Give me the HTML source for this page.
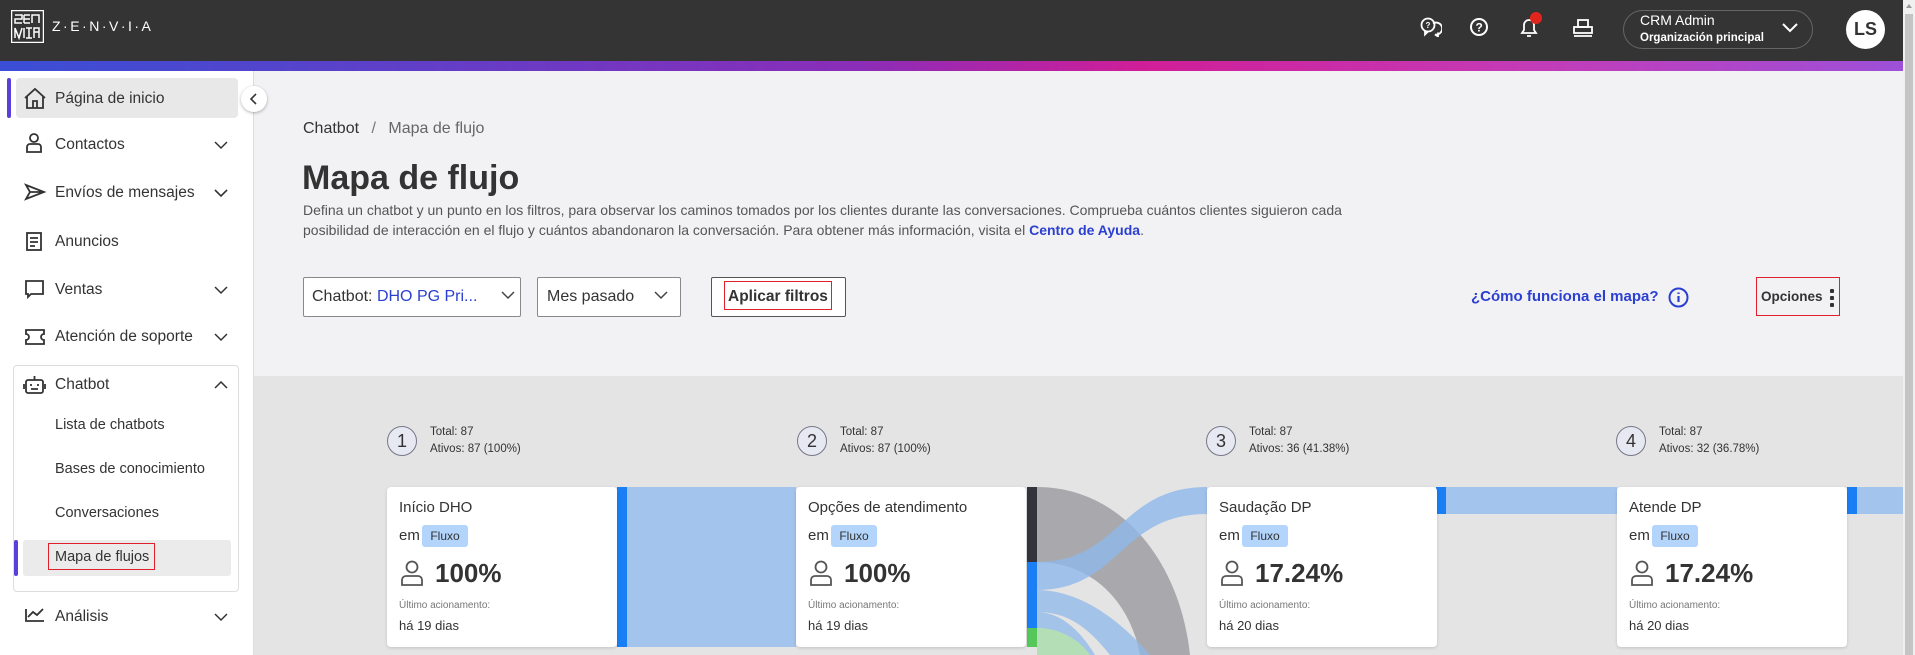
<!DOCTYPE html>
<html><head><meta charset="utf-8"><style>
*{box-sizing:border-box;margin:0;padding:0}
body{width:1915px;height:655px;overflow:hidden;background:#f2f2f4;font-family:"Liberation Sans",sans-serif;color:#333;position:relative}
.abs{position:absolute}
.top{left:0;top:0;width:1903px;height:61px;background:#343434}
.grad{left:0;top:61px;width:1903px;height:10px;background:linear-gradient(90deg,#3a4fd6 0%,#8a2db8 45%,#d01e98 60%,#c43bb6 80%,#9d50d8 100%)}
.sb{left:1903px;top:0;width:12px;height:655px;background:#f0f0f0}
.side{left:0;top:71px;width:254px;height:584px;background:#fff;border-right:1px solid #ddd}
.it{position:absolute;left:55px;font-size:15.5px;color:#333;line-height:20px}
.t{white-space:nowrap}
.card{position:absolute;top:487px;width:230px;height:160px;background:#fff;border-radius:4px;box-shadow:0 1px 3px rgba(0,0,0,.15)}
.card .ti{position:absolute;left:12px;top:12px;font-size:15px;color:#333}
.card .em{position:absolute;left:12px;top:40px;font-size:15px;color:#333}
.card .pill{position:absolute;left:35px;top:38px;width:46px;height:22px;background:#b3d4fb;border-radius:3px;font-size:12px;line-height:22px;text-align:center;color:#333}
.card .pc{position:absolute;left:48px;top:71px;font-size:26px;font-weight:bold;color:#333}
.card .ul{position:absolute;left:12px;top:113px;font-size:10px;color:#777}
.card .ha{position:absolute;left:12px;top:131px;font-size:13px;color:#333}
.step{position:absolute;top:426px;width:30px;height:30px;border:1px solid #778;border-radius:50%;background:#e6e8f2;font-size:18px;text-align:center;line-height:28px;color:#333}
.st{position:absolute;font-size:11.5px;color:#333;line-height:17px}
</style></head><body>
<div class="abs top"></div>
<div class="abs grad"></div>
<div class="abs sb"><div style="position:absolute;left:2px;top:14px;width:8px;height:641px;background:#c4c4c4"></div><div style="position:absolute;left:3px;top:4px;width:0;height:0;border-left:3px solid transparent;border-right:3px solid transparent;border-bottom:4px solid #999"></div></div>
<svg class="abs" style="left:11px;top:10px" width="33" height="33" viewBox="0 0 33 33"><rect x="0.5" y="0.5" width="32" height="32" fill="none" stroke="#fff" stroke-width="1.5"/><path d="M4 5h7v4H4v4h7M13 5h6M13 9h6M13 13h6M13 5v8M21 13V5h7v8M4 28V18l4 10 3-10M13 18v10M15 18h6M15 28h6M18 18v10M23 28v-6h5v6M23 22v-4h5v4" stroke="#fff" stroke-width="1.5" fill="none"/></svg>
<div class="abs t" style="left:52px;top:18px;color:#fff;font-size:14px;letter-spacing:2.5px">Z·E·N·V·I·A</div>
<svg class="abs" style="left:1420px;top:17px" width="22" height="20" viewBox="0 0 22 20" fill="none" stroke="#fff" stroke-width="1.8"><circle cx="8" cy="8" r="6.5"/><path d="M8 14.5l-3 3v-4M13 6.5a6 6 0 1 1 2 11l3 2v-4"/><text x="5.5" y="11" font-size="8" fill="#fff" stroke="none" font-weight="bold">?</text></svg>
<svg class="abs" style="left:1469px;top:17px" width="20" height="20" viewBox="0 0 20 20"><circle cx="10" cy="10" r="8" fill="none" stroke="#fff" stroke-width="2"/><text x="6.5" y="14.5" font-size="12" font-weight="bold" fill="#fff" font-family="Liberation Sans">?</text></svg>
<svg class="abs" style="left:1518px;top:15px" width="22" height="24" viewBox="0 0 22 24" fill="none" stroke="#fff" stroke-width="1.8"><path d="M4 18h14l-2-3V10a5 5 0 0 0-10 0v5zM9 21h4"/></svg>
<div class="abs" style="left:1530px;top:12px;width:12px;height:12px;border-radius:50%;background:#e0261c"></div>
<svg class="abs" style="left:1573px;top:18px" width="20" height="20" viewBox="0 0 20 20" fill="none" stroke="#fff" stroke-width="1.8"><rect x="5" y="2" width="10" height="7"/><rect x="1" y="9" width="18" height="6"/><path d="M1 18h18"/></svg>
<div class="abs" style="left:1623px;top:10px;width:190px;height:39px;border:1px solid #666;border-radius:20px"></div>
<div class="abs t" style="left:1640px;top:12px;color:#fff;font-size:14px">CRM Admin</div>
<div class="abs t" style="left:1640px;top:32px;color:#fff;font-size:11.5px;font-weight:bold">Organización principal</div>
<svg class="abs" style="left:1781px;top:22px" width="18" height="12" viewBox="0 0 18 12"><path d="M2 2l7 7 7-7" stroke="#fff" stroke-width="2" fill="none"/></svg>
<div class="abs" style="left:1846px;top:10px;width:39px;height:39px;border-radius:50%;background:#fff;color:#333;font-weight:bold;font-size:18px;text-align:center;line-height:39px">LS</div>
<div class="abs side">
<div class="abs" style="left:7px;top:7px;width:4px;height:40px;background:#5b3fd9;border-radius:2px"></div>
<div class="abs" style="left:16px;top:7px;width:222px;height:40px;background:#e8e8e8;border-radius:4px"></div>
<div class="abs" style="left:13px;top:294px;width:226px;height:227px;border:1px solid #ddd;border-radius:4px"></div>
<div class="abs" style="left:14px;top:469px;width:4px;height:36px;background:#5b3fd9;border-radius:2px"></div>
<div class="abs" style="left:23px;top:469px;width:208px;height:36px;background:#ebebeb;border-radius:3px"></div>
<div class="abs" style="left:48px;top:472px;width:107px;height:27px;border:1px solid #e0202a"></div>
</div>
<svg class="abs" style="left:0;top:71px" width="254" height="584" fill="none" stroke="#333" stroke-width="1.8">
<path d="M25 27l10-9 10 9M27 25v12h16V25M33 37v-7h4v7"/>
<circle cx="34" cy="67" r="4"/><path d="M27 81v-5a3 3 0 0 1 3-3h8a3 3 0 0 1 3 3v5z"/>
<path d="M26 114l18 7-18 7 4-7z M30 121h14"/>
<rect x="27" y="162" width="14" height="17"/><path d="M30 167h8M30 171h8M30 175h5"/>
<path d="M26 210h17v13H31l-3 3v-3h-2z"/>
<path d="M26 259h18v4a3 3 0 0 0 0 6v4H26v-4a3 3 0 0 0 0-6z"/>
<rect x="26" y="309" width="17" height="13" rx="2"/><path d="M34.5 305v4M30 314h2M37 314h2M31 318h7M24 313v5M45 313v5"/>
<path d="M26 538v12h18M28 546l5-5 4 3 6-6"/>
<path d="M215 71l6 6 6-6M215 119l6 6 6-6M215 216l6 6 6-6M215 263l6 6 6-6M215 317l6-6 6 6M215 543l6 6 6-6" stroke-width="1.5"/>
</svg>
<div class="it t" style="top:89px">Página de inicio</div>
<div class="it t" style="top:135px">Contactos</div>
<div class="it t" style="top:183px">Envíos de mensajes</div>
<div class="it t" style="top:232px">Anuncios</div>
<div class="it t" style="top:280px">Ventas</div>
<div class="it t" style="top:327px">Atención de soporte</div>
<div class="it t" style="top:375px">Chatbot</div>
<div class="it t" style="top:415px;font-size:14.5px">Lista de chatbots</div>
<div class="it t" style="top:459px;font-size:14.5px">Bases de conocimiento</div>
<div class="it t" style="top:503px;font-size:14.5px">Conversaciones</div>
<div class="it t" style="top:547px;font-size:14.5px">Mapa de flujos</div>
<div class="it t" style="top:607px">Análisis</div>
<svg class="abs" style="left:0;top:0" width="254" height="260" fill="none" stroke="#333" stroke-width="1.5"><path d="M215 190l6 6 6-6"/></svg>
<div class="abs" style="left:241px;top:86px;width:26px;height:26px;border-radius:50%;background:#fff;box-shadow:0 1px 3px rgba(0,0,0,.3)"></div>
<svg class="abs" style="left:249px;top:92px" width="10" height="14"><path d="M7 2L2 7l5 5" stroke="#333" stroke-width="1.6" fill="none"/></svg>
<div class="abs t" style="left:303px;top:120px;font-size:16px;color:#333">Chatbot <span style="color:#777;margin:0 8px">/</span> <span style="color:#666">Mapa de flujo</span></div>
<div class="abs t" style="left:302px;top:159px;font-size:34px;font-weight:bold;color:#333">Mapa de flujo</div>
<div class="abs" style="left:303px;top:201px;width:1060px;font-size:14px;line-height:19.5px;color:#555">Defina un chatbot y un punto en los filtros, para observar los caminos tomados por los clientes durante las conversaciones. Comprueba cuántos clientes siguieron cada posibilidad de interacción en el flujo y cuántos abandonaron la conversación. Para obtener más información, visita el <b style="color:#2b3fd0">Centro de Ayuda</b>.</div>
<div class="abs" style="left:303px;top:277px;width:218px;height:40px;border:1px solid #888;background:#fff;border-radius:2px"></div>
<div class="abs t" style="left:312px;top:288px;font-size:16px;color:#333">Chatbot: <span style="color:#2b3fd0">DHO PG Pri...</span></div>
<div class="abs" style="left:537px;top:277px;width:144px;height:40px;border:1px solid #888;background:#fff;border-radius:2px"></div>
<div class="abs t" style="left:547px;top:288px;font-size:16px;color:#333">Mes pasado</div>
<svg class="abs" style="left:0;top:0" width="700" height="330" fill="none" stroke="#444" stroke-width="1.5"><path d="M502 292l6 6 6-6M655 292l6 6 6-6"/></svg>
<div class="abs" style="left:711px;top:277px;width:135px;height:40px;border:1px solid #555;background:#fff;border-radius:2px"></div>
<div class="abs" style="left:724px;top:281px;width:108px;height:29px;border:1px solid #e0202a"></div>
<div class="abs t" style="left:728px;top:288px;font-size:15.5px;font-weight:bold;color:#333">Aplicar filtros</div>
<div class="abs t" style="left:1471px;top:288px;font-size:15px;font-weight:bold;color:#2b3fd0">¿Cómo funciona el mapa?</div>
<svg class="abs" style="left:1668px;top:287px" width="21" height="21"><circle cx="10.5" cy="10.5" r="9" stroke="#2b3fd0" stroke-width="2" fill="none"/><path d="M10.5 9v6M10.5 5.5v1.5" stroke="#2b3fd0" stroke-width="2.2"/></svg>
<div class="abs" style="left:1756px;top:277px;width:84px;height:39px;border:1px solid #e0202a"></div>
<div class="abs t" style="left:1761px;top:289px;font-size:13.5px;font-weight:bold;color:#333">Opciones</div>
<div class="abs" style="left:1830px;top:289px;width:4px;height:4px;background:#333;border-radius:1px;box-shadow:0 7px 0 #333,0 14px 0 #333"></div>
<div class="abs" style="left:254px;top:376px;width:1649px;height:279px;background:#e4e4e4"></div>
<svg class="abs" style="left:0;top:0" width="1915" height="655">
<rect x="627" y="487" width="169" height="160" fill="#a3c4ec"/>
<path d="M1037 487C1120 487 1180 560 1190 655L1140 655C1130 600 1090 562 1037 562Z" fill="#a9a9ad"/>
<path d="M1037 590C1080 590 1120 620 1150 655L1110 655C1090 630 1070 612 1037 612Z" fill="#8fb8ea" opacity=".75"/>
<path d="M1037 612C1060 612 1080 630 1095 655L1080 655C1070 640 1055 628 1037 628Z" fill="#8fb8ea" opacity=".75"/>
<path d="M1037 628C1060 628 1080 640 1090 655L1037 655Z" fill="#b4dfb6"/>
<path d="M1037 562C1120 562 1120 487 1207 487L1207 514C1120 514 1120 590 1037 590Z" fill="#8fb8ea" opacity=".8"/>
<rect x="1446" y="487" width="171" height="27" fill="#a3c4ec"/>
<rect x="1857" y="487" width="46" height="27" fill="#a3c4ec"/>
<rect x="617" y="487" width="10" height="160" fill="#1a7ff5"/>
<rect x="1027" y="487" width="10" height="75" fill="#33333b"/>
<rect x="1027" y="562" width="10" height="66" fill="#1a7ff5"/>
<rect x="1027" y="628" width="10" height="19" fill="#56c85a"/>
<rect x="1436" y="487" width="10" height="27" fill="#1a7ff5"/>
<rect x="1847" y="487" width="10" height="27" fill="#1a7ff5"/>
</svg>
<div class="step" style="left:387px">1</div><div class="st t" style="left:430px;top:424px">Total: 87<br>Ativos: 87 (100%)</div>
<div class="step" style="left:797px">2</div><div class="st t" style="left:840px;top:424px">Total: 87<br>Ativos: 87 (100%)</div>
<div class="step" style="left:1206px">3</div><div class="st t" style="left:1249px;top:424px">Total: 87<br>Ativos: 36 (41.38%)</div>
<div class="step" style="left:1616px">4</div><div class="st t" style="left:1659px;top:424px">Total: 87<br>Ativos: 32 (36.78%)</div>
<div class="card" style="left:387px"><div class="ti t">Início DHO</div><div class="em">em</div><div class="pill">Fluxo</div><svg class="abs" style="left:12px;top:72px" width="26" height="28" fill="none" stroke="#555" stroke-width="1.8"><circle cx="13" cy="8" r="5.5"/><path d="M3 26v-5a4 4 0 0 1 4-4h12a4 4 0 0 1 4 4v5z"/></svg><div class="pc">100%</div><div class="ul t">Último acionamento:</div><div class="ha t">há 19 dias</div></div>
<div class="card" style="left:796px"><div class="ti t">Opções de atendimento</div><div class="em">em</div><div class="pill">Fluxo</div><svg class="abs" style="left:12px;top:72px" width="26" height="28" fill="none" stroke="#555" stroke-width="1.8"><circle cx="13" cy="8" r="5.5"/><path d="M3 26v-5a4 4 0 0 1 4-4h12a4 4 0 0 1 4 4v5z"/></svg><div class="pc">100%</div><div class="ul t">Último acionamento:</div><div class="ha t">há 19 dias</div></div>
<div class="card" style="left:1207px"><div class="ti t">Saudação DP</div><div class="em">em</div><div class="pill">Fluxo</div><svg class="abs" style="left:12px;top:72px" width="26" height="28" fill="none" stroke="#555" stroke-width="1.8"><circle cx="13" cy="8" r="5.5"/><path d="M3 26v-5a4 4 0 0 1 4-4h12a4 4 0 0 1 4 4v5z"/></svg><div class="pc">17.24%</div><div class="ul t">Último acionamento:</div><div class="ha t">há 20 dias</div></div>
<div class="card" style="left:1617px"><div class="ti t">Atende DP</div><div class="em">em</div><div class="pill">Fluxo</div><svg class="abs" style="left:12px;top:72px" width="26" height="28" fill="none" stroke="#555" stroke-width="1.8"><circle cx="13" cy="8" r="5.5"/><path d="M3 26v-5a4 4 0 0 1 4-4h12a4 4 0 0 1 4 4v5z"/></svg><div class="pc">17.24%</div><div class="ul t">Último acionamento:</div><div class="ha t">há 20 dias</div></div>
</body></html>
